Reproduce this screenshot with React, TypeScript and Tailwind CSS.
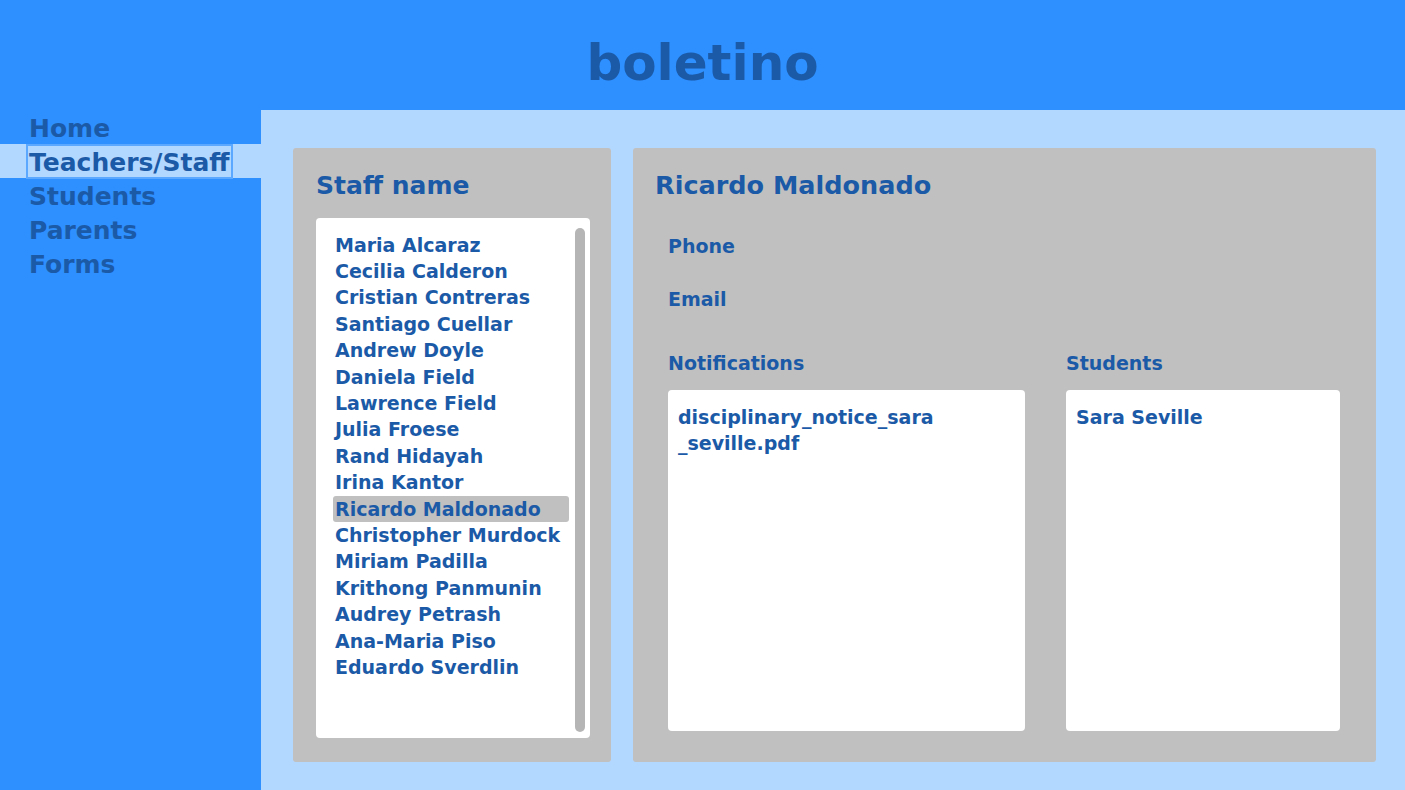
import { useState } from 'react'

const staff = [
  'Maria Alcaraz',
  'Cecilia Calderon',
  'Cristian Contreras',
  'Santiago Cuellar',
  'Andrew Doyle',
  'Daniela Field',
  'Lawrence Field',
  'Julia Froese',
  'Rand Hidayah',
  'Irina Kantor',
  'Ricardo Maldonado',
  'Christopher Murdock',
  'Miriam Padilla',
  'Krithong Panmunin',
  'Audrey Petrash',
  'Ana-Maria Piso',
  'Eduardo Sverdlin',
]

const nav = ['Home', 'Teachers/Staff', 'Students', 'Parents', 'Forms']

function App() {
  const [selected, setSelected] = useState('Ricardo Maldonado')
  const [page, setPage] = useState('Teachers/Staff')

  return (
    <div className="w-[1405px] h-[790px] flex flex-col bg-[#2e8fff] text-[#1b5aa7] font-['DejaVu_Sans',Verdana,sans-serif] font-bold overflow-hidden">
      <header className="h-[110px] shrink-0 flex items-center justify-center">
        <h1 className="text-[50px] leading-none pt-[16px]">boletino</h1>
      </header>

      <div className="flex flex-1 min-h-0">
        <nav className="w-[261px] shrink-0 flex flex-col">
          {nav.map((item) => (
            <button
              key={item}
              onClick={() => setPage(item)}
              className={`h-[34px] text-left pl-[28px] text-[25px] leading-none ${page === item ? 'bg-[#b3d8ff]' : ''}`}
            >
              <span className={`inline-block px-[1px] pt-[4px] pb-[2px] ${page === item ? 'outline outline-2 outline-[#5aa8ff]' : ''}`}>{item}</span>
            </button>
          ))}
        </nav>

        <main className="flex-1 bg-[#b3d8ff] flex gap-[22px] pl-[32px] pr-[29px] pt-[38px] pb-[28px]">
          <section className="w-[318px] bg-[#c0c0c0] rounded-[3px] flex flex-col pl-[23px] pr-[21px] pt-[25px] pb-[24px]">
            <h2 className="text-[25px] leading-none mb-[20px]">Staff name</h2>
            <div className="flex-1 bg-white rounded-[4px] flex pl-[17px] pr-[5px] pt-[14px] pb-[6px]">
              <ul className="flex-1 flex flex-col pr-[6px]">
                {staff.map((name) => (
                  <li key={name}>
                    <button
                      onClick={() => setSelected(name)}
                      className={`w-full text-left text-[19px] leading-none h-[26.4px] flex items-center px-[2px] rounded-[3px] ${selected === name ? 'bg-[#c0c0c0]' : ''}`}
                    >
                      {name}
                    </button>
                  </li>
                ))}
              </ul>
              <div className="w-[10px] mt-[-4px] bg-[#b5b5b5] rounded-[5px]" />
            </div>
          </section>

          <section className="flex-1 bg-[#c0c0c0] rounded-[3px] flex flex-col pl-[22px] pr-[36px] pt-[25px] pb-[31px]">
            <h2 className="text-[25.5px] leading-none mb-[38px]">{selected}</h2>
            <div className="pl-[13px] flex flex-col flex-1 min-h-0">
              <p className="text-[19px] leading-none">Phone</p>
              <p className="text-[19px] leading-none mt-[34px]">Email</p>
              <div className="flex gap-[41px] flex-1 min-h-0 mt-[45px]">
                <div className="w-[357px] flex flex-col">
                  <p className="text-[19px] leading-none mb-[17px]">Notifications</p>
                  <div className="flex-1 bg-white rounded-[4px] px-[10px] pt-[14px] text-[19px] leading-[26px]">
                    disciplinary_notice_sara
                    <br />
                    _seville.pdf
                  </div>
                </div>
                <div className="flex-1 flex flex-col">
                  <p className="text-[19px] leading-none mb-[17px]">Students</p>
                  <div className="flex-1 bg-white rounded-[4px] px-[10px] pt-[14px] text-[19px] leading-[26px]">
                    Sara Seville
                  </div>
                </div>
              </div>
            </div>
          </section>
        </main>
      </div>
    </div>
  )
}

export default App
